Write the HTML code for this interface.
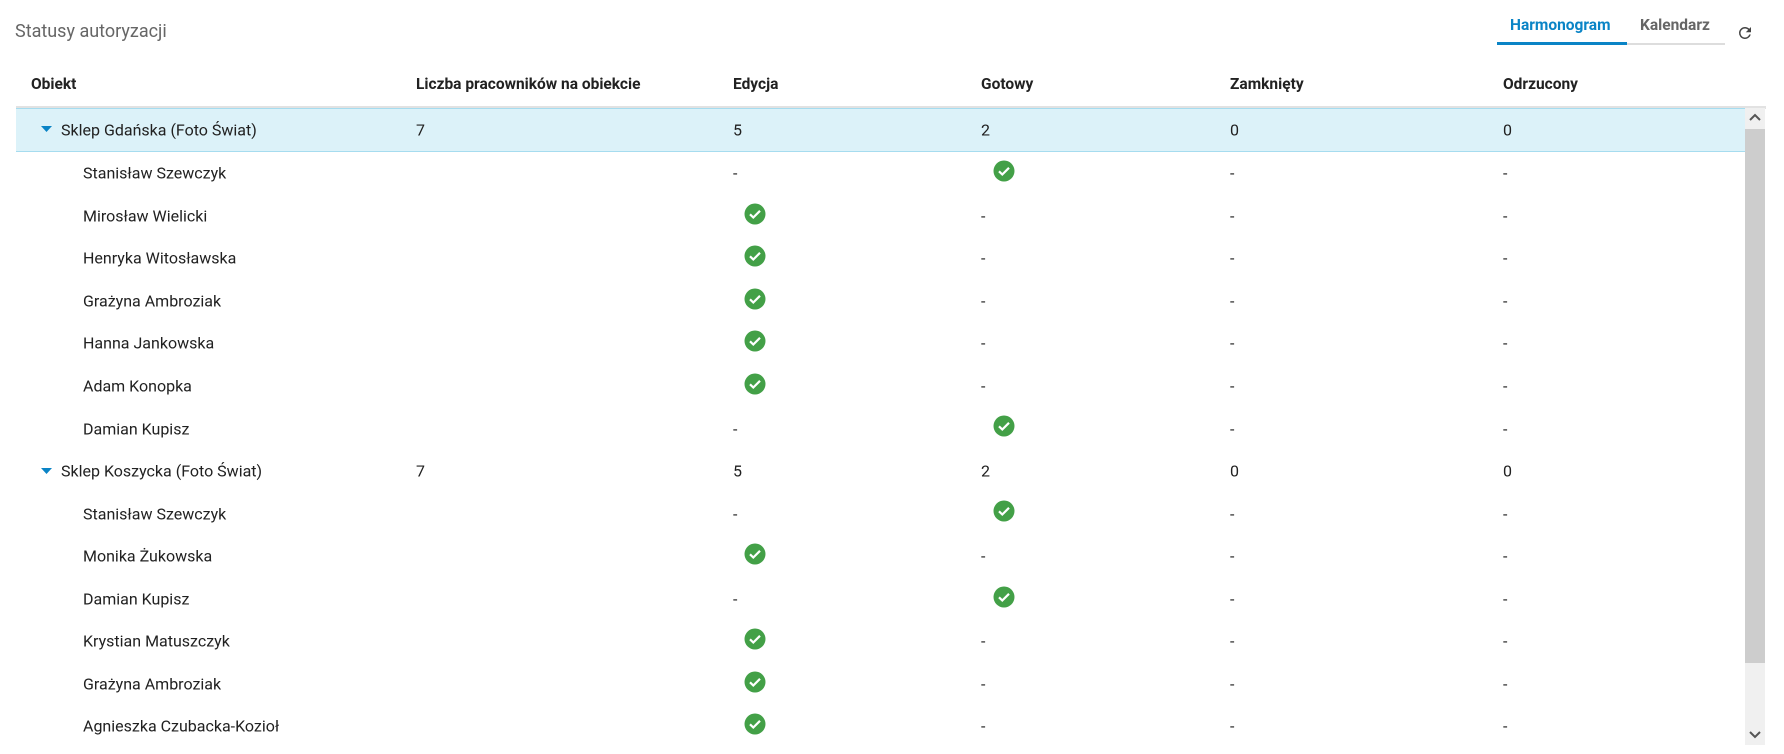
<!DOCTYPE html>
<html><head><meta charset="utf-8"><style>
*{margin:0;padding:0;box-sizing:border-box}
body{width:1784px;height:754px;overflow:hidden;background:#fff;font-family:"Roboto","Liberation Sans",sans-serif;color:#212121;position:relative;font-size:16px}
.a{position:absolute;white-space:nowrap}
.title{left:15px;top:21px;font-size:18px;color:#666}
.tab{top:16px;font-size:15.5px;font-weight:bold}
.hd{top:75px;font-weight:bold;font-size:15.5px;color:#222}
.row{position:absolute;left:16px;width:1736px;height:43px}
.row span{position:absolute;top:50%;transform:translateY(-50%);white-space:nowrap}
.ck{position:absolute;width:22px;height:22px}
</style></head><body>
<div class="a title">Statusy autoryzacji</div>
<div class="a tab" style="left:1510px;color:#0a84c6">Harmonogram</div>
<div class="a tab" style="left:1640px;color:#666">Kalendarz</div>
<div class="a" style="left:1497px;top:42px;width:130px;height:3px;background:#0a84c6"></div>
<div class="a" style="left:1627px;top:43px;width:98px;height:2px;background:#ddd"></div>
<svg class="a" style="left:1736px;top:24px" width="18" height="18" viewBox="0 0 24 24"><path fill="#444" d="M17.65 6.35A7.96 7.96 0 0 0 12 4a8 8 0 1 0 7.73 10h-2.08A6 6 0 1 1 12 6c1.66 0 3.14.69 4.22 1.78L13 11h7V4l-2.35 2.35z"/></svg>
<div class="a hd" style="left:31px">Obiekt</div>
<div class="a hd" style="left:416px">Liczba pracowników na obiekcie</div>
<div class="a hd" style="left:733px">Edycja</div>
<div class="a hd" style="left:981px">Gotowy</div>
<div class="a hd" style="left:1230px">Zamknięty</div>
<div class="a hd" style="left:1503px">Odrzucony</div>
<div class="a" style="left:16px;top:106px;width:1750px;height:3px;background:#e2e2e2"></div>
<div class="a" style="left:16px;top:108px;width:1736px;height:44px;background:#dcf2f9;border-top:1px solid #a6dcef;border-bottom:1px solid #a6dcef"></div>
<div class="a" style="left:1745px;top:108px;width:20px;height:637px;background:#f0f0f0"></div>
<div class="a" style="left:1745px;top:129px;width:20px;height:534px;background:#cdcdcd"></div>
<svg class="a" style="left:1749px;top:113px" width="12" height="8"><path d="M1 7L6 2L11 7" stroke="#555" stroke-width="2" fill="none"/></svg>
<svg class="a" style="left:1749px;top:731px" width="12" height="8"><path d="M1 1L6 6L11 1" stroke="#555" stroke-width="2" fill="none"/></svg>
<div id="rows"></div>
<script>
var C='<svg class="ck" viewBox="0 0 22 22" style="left:LEFTpx;top:8px"><circle cx="11" cy="11" r="10.5" fill="#43a047"/><path d="M6 11.3l3.3 3.2L16 7.8" stroke="#fff" stroke-width="2.2" fill="none"/></svg>';
function ck(x){return C.replace('LEFT',x-16-11);}
var data=[
["p","Sklep Gdańska (Foto Świat)","7","5","2","0","0"],
["c","Stanisław Szewczyk","-","G"],["c","Mirosław Wielicki","E","-"],["c","Henryka Witosławska","E","-"],["c","Grażyna Ambroziak","E","-"],["c","Hanna Jankowska","E","-"],["c","Adam Konopka","E","-"],["c","Damian Kupisz","-","G"],
["p","Sklep Koszycka (Foto Świat)","7","5","2","0","0"],
["c","Stanisław Szewczyk","-","G"],["c","Monika Żukowska","E","-"],["c","Damian Kupisz","-","G"],["c","Krystian Matuszczyk","E","-"],["c","Grażyna Ambroziak","E","-"],["c","Agnieszka Czubacka-Kozioł","E","-"]];
var h='',y=108;
data.forEach(function(r,i){var hh=i==0?44:42.55;h+='<div class="row" style="top:'+y+'px;height:'+hh+'px">';
if(r[0]=='p'){h+='<svg style="position:absolute;left:25px;top:18px" width="11" height="7"><path d="M0 0H11L5.5 6z" fill="#0a84c6"/></svg>';
h+='<span style="left:45px">'+r[1]+'</span><span style="left:400px">'+r[2]+'</span><span style="left:717px">'+r[3]+'</span><span style="left:965px">'+r[4]+'</span><span style="left:1214px">'+r[5]+'</span><span style="left:1487px">'+r[6]+'</span>';}
else{h+='<span style="left:67px">'+r[1]+'</span>';
h+=r[2]=='E'?ck(755):'<span style="left:717px">-</span>';
h+=r[3]=='G'?ck(1004):'<span style="left:965px">-</span>';
h+='<span style="left:1214px">-</span><span style="left:1487px">-</span>';}
h+='</div>';y+=hh;});
document.getElementById('rows').innerHTML=h;
</script>
</body></html>
